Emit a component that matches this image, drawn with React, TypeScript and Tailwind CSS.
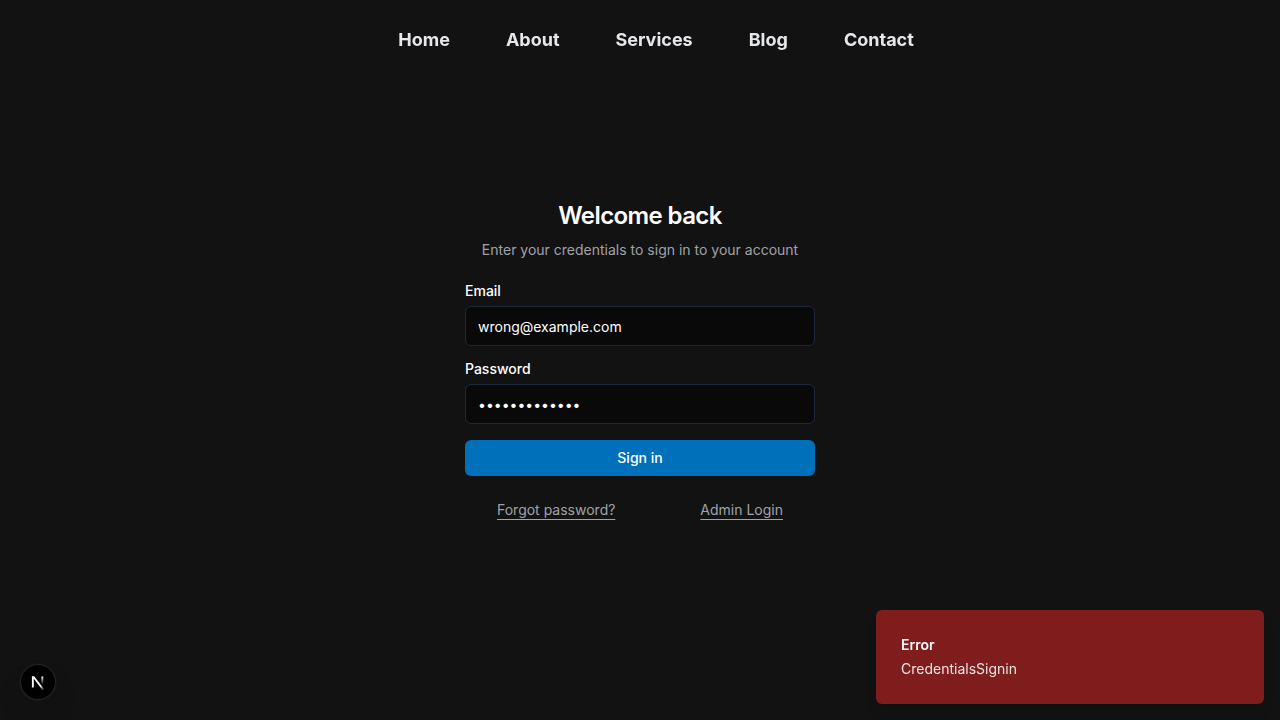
import React from "react";

const links = ["Home", "About", "Services", "Blog", "Contact"];

export default function App() {
  return (
    <div className="relative flex h-screen flex-col overflow-hidden bg-[#121212] font-['Inter',sans-serif] text-white">
      <nav className="flex h-20 items-center justify-center gap-14 pl-8 text-lg font-bold text-[#e5e7eb] antialiased will-change-transform">
        {links.map((l) => (
          <a key={l} href="#">{l}</a>
        ))}
      </nav>
      <main className="mx-auto flex w-[350px] flex-col pt-[120px]">
        <h1 className="text-center text-2xl font-semibold tracking-tight">Welcome back</h1>
        <p className="mt-2 text-center text-sm text-[#a1a1aa]">Enter your credentials to sign in to your account</p>
        <form className="mt-6 flex flex-col" onSubmit={(e) => e.preventDefault()}>
          <label htmlFor="email" className="text-sm leading-none font-medium">Email</label>
          <input id="email" type="email" defaultValue="wrong@example.com" className="mt-2 h-10 rounded-md border border-[#1d283a] bg-[#090909] px-3 py-2 text-sm" />
          <label htmlFor="password" className="mt-4 text-sm leading-none font-medium">Password</label>
          <input id="password" type="password" defaultValue="wrongpassword" className="mt-2 h-10 rounded-md border border-[#1d283a] bg-[#090909] px-3 py-2 text-sm" />
          <button type="submit" className="mt-4 h-9 rounded-md bg-[#0070bb] text-sm font-medium">Sign in</button>
        </form>
        <div className="mt-6 flex justify-between px-8 text-sm text-[#a1a1aa]">
          <a href="#" className="underline underline-offset-4">Forgot password?</a>
          <a href="#" className="underline underline-offset-4">Admin Login</a>
        </div>
      </main>
      <div className="absolute right-4 bottom-4 flex h-[94px] w-[388px] flex-col justify-center gap-1 rounded-md bg-[#7f1d1d] px-[25px] text-sm text-slate-50 shadow-lg will-change-transform">
        <div className="font-semibold">Error</div>
        <div className="opacity-90">CredentialsSignin</div>
      </div>
      <div className="absolute bottom-5 left-5 flex size-9 items-center justify-center rounded-full bg-black shadow-[0_0_0_1px_#171717,inset_0_0_0_1px_rgba(255,255,255,0.14),0_16px_32px_-8px_rgba(0,0,0,0.24)]">
        <svg className="shrink-0" width="40" height="40" viewBox="0 0 40 40" fill="none">
          <defs>
            <linearGradient id="diagonal" x1="9.956" y1="11.123" x2="15.478" y2="17.967" gradientUnits="userSpaceOnUse">
              <stop stopColor="white" />
              <stop offset="0.604" stopColor="white" stopOpacity="0" />
              <stop offset="1" stopColor="white" stopOpacity="0" />
            </linearGradient>
            <linearGradient id="stem" x1="11.822" y1="1.4" x2="11.791" y2="9.625" gradientUnits="userSpaceOnUse">
              <stop stopColor="white" />
              <stop offset="1" stopColor="white" stopOpacity="0" />
            </linearGradient>
            <clipPath id="flat-top">
              <rect x="0" y="1.3" width="16" height="16" />
            </clipPath>
          </defs>
          <g transform="translate(12.5 13)" strokeWidth="1.86">
            <path d="M13.3 15.2L2.34 1V12.6" stroke="url(#diagonal)" clipPath="url(#flat-top)" />
            <path d="M11.825 1.5V13.1" stroke="url(#stem)" />
          </g>
        </svg>
      </div>
    </div>
  );
}
